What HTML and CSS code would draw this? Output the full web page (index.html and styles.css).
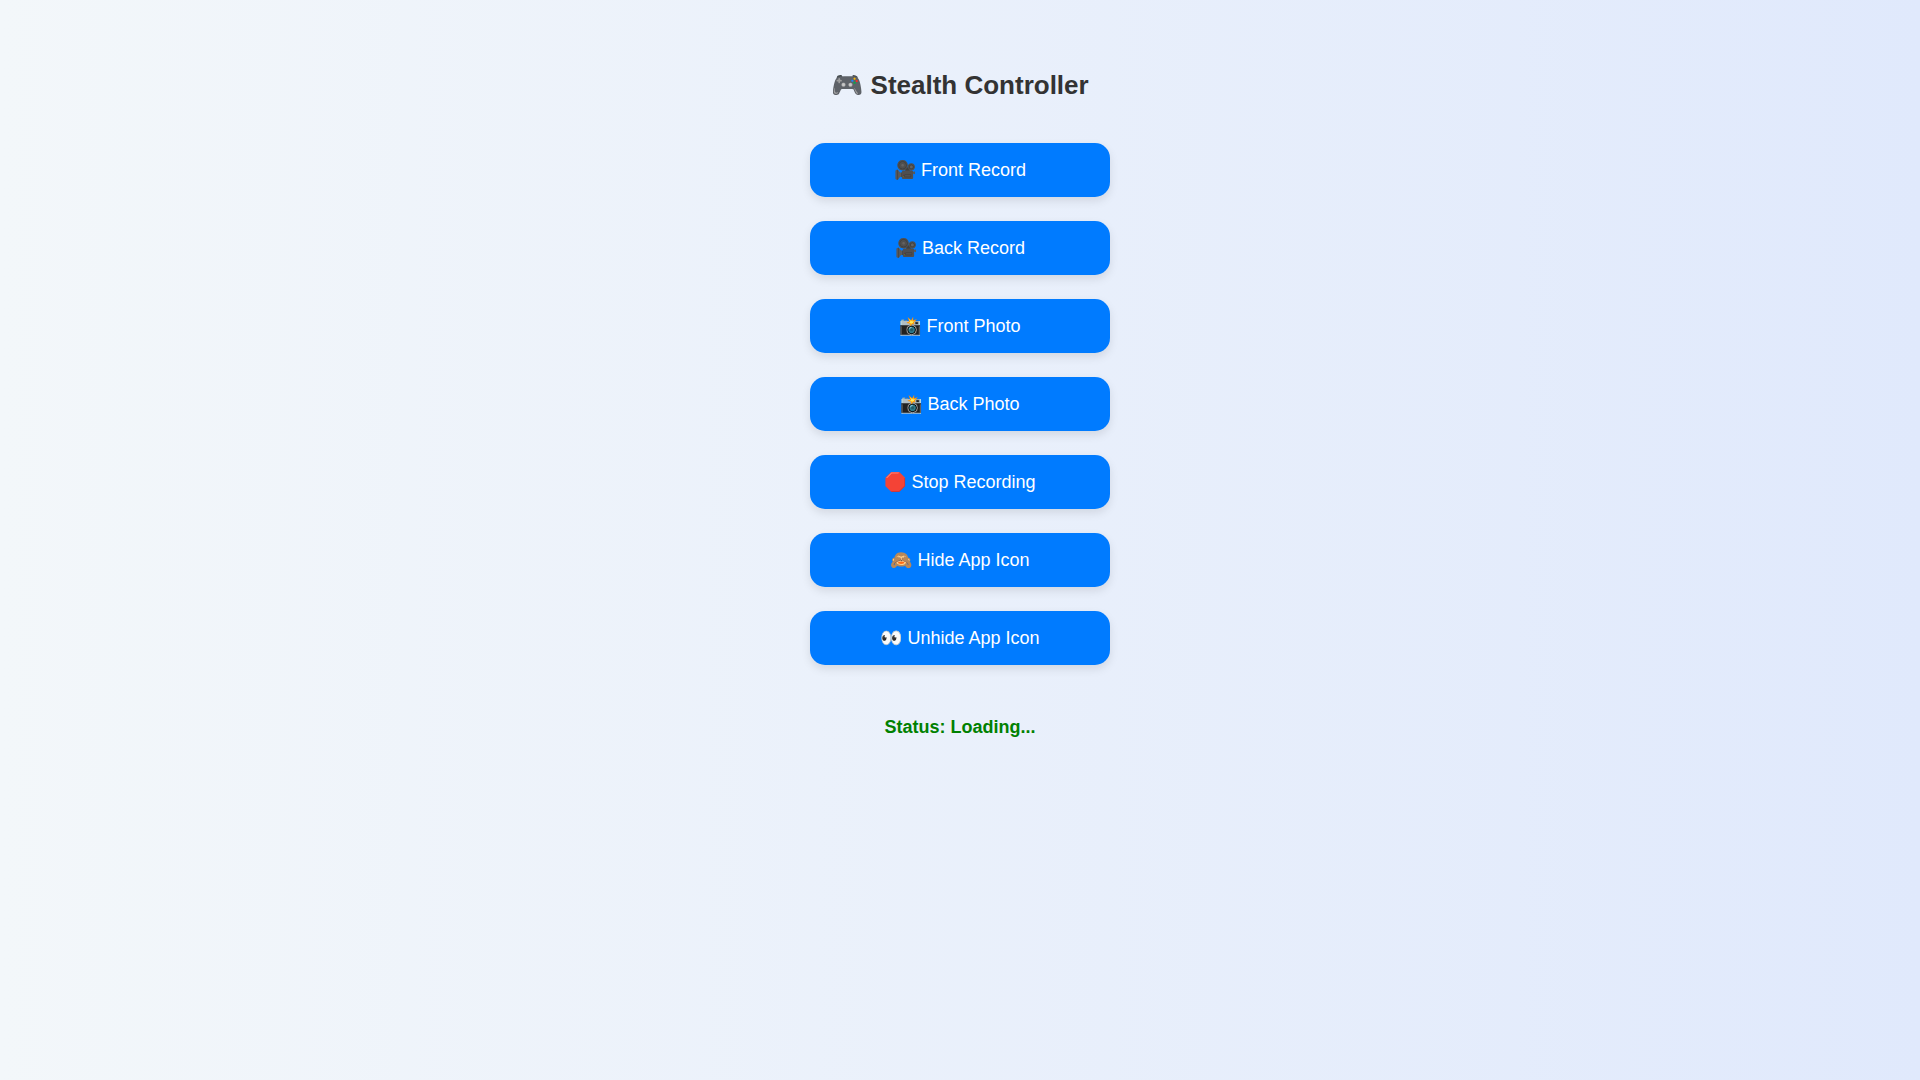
FILE: index.html
```html
<!DOCTYPE html>
<html lang="en">
<head>
  <meta charset="UTF-8">
  <meta name="viewport" content="width=device-width, initial-scale=1.0">
  <title>Stealth Controller</title>
  <link rel="stylesheet" href="styles.css">
</head>
<body>
  <h2>🎮 Stealth Controller</h2>

  <div class="controls">
    <button type="button">🎥 Front Record</button>
    <button type="button">🎥 Back Record</button>
    <button type="button">📸 Front Photo</button>
    <button type="button">📸 Back Photo</button>
    <button type="button">🛑 Stop Recording</button>
    <button type="button">🙈 Hide App Icon</button>
    <button type="button">👀 Unhide App Icon</button>
  </div>

  <div id="status">Status: Loading...</div>
</body>
</html>
```

FILE: styles.css
```css
body {
  font-family: "Liberation Sans", Arial, sans-serif;
  text-align: center;
  margin: 0;
  padding: 40px;
  background: linear-gradient(to right, #f3f7fa, #e0e9fc);
}
h2 {
  font-size: 26px;
  line-height: 31px;
  color: #333;
  margin: 30px 0;
}
.controls {
  display: flex;
  flex-direction: column;
  align-items: center;
}
button {
  width: 300px;
  margin: 12px;
  padding: 16px;
  font-family: inherit;
  font-size: 18px;
  color: white;
  background-color: #007bff;
  border: none;
  border-radius: 15px;
  box-shadow: 0 4px 10px rgba(0, 0, 0, 0.1);
  cursor: pointer;
}
button:hover {
  background-color: #0056b3;
}
#status {
  margin-top: 40px;
  font-size: 18px;
  font-weight: bold;
  color: green;
}
```
